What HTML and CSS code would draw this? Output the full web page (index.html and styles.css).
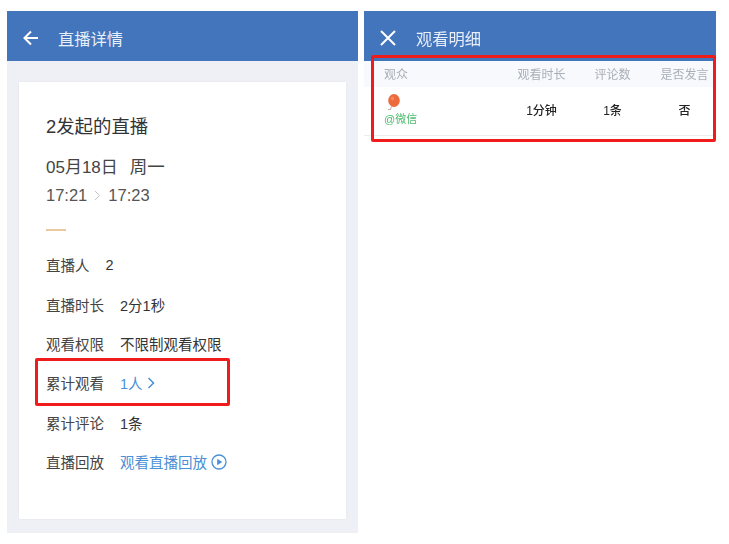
FILE: index.html
```html
<!DOCTYPE html>
<html lang="zh-CN">
<head>
<meta charset="utf-8">
<title>直播详情</title>
<link rel="stylesheet" href="styles.css">
</head>
<body>
<div class="stage">
  <section class="panel panel-detail">
    <header class="bar">
      <svg class="bar-icon" width="18" height="18" viewBox="0 0 18 18"><path d="M16 9H2.500M9 2.500 2.500 9 9 15.500" fill="none" stroke="#fff" stroke-width="2"/></svg>
      <h1 class="bar-title">直播详情</h1>
    </header>
    <div class="card">
      <h2 class="live-title">2发起的直播</h2>
      <p class="live-date">05月18日<span class="weekday">周一</span></p>
      <p class="live-time">17:21<svg class="time-arrow" width="7" height="11" viewBox="0 0 7 11"><path d="M1 1l4.500 4.500L1 10" fill="none" stroke="#c4c4c4" stroke-width="1"/></svg>17:23</p>
      <div class="rule"></div>
      <dl class="facts">
        <div class="fact"><dt>直播人</dt><dd>2</dd></div>
        <div class="fact"><dt>直播时长</dt><dd>2分1秒</dd></div>
        <div class="fact"><dt>观看权限</dt><dd>不限制观看权限</dd></div>
        <div class="fact"><dt>累计观看</dt><dd class="link">1人 <svg width="8" height="12" viewBox="0 0 8 12"><path d="M1.500 1l5 5-5 5" fill="none" stroke="#4a90d6" stroke-width="1.500"/></svg></dd></div>
        <div class="fact"><dt>累计评论</dt><dd>1条</dd></div>
        <div class="fact"><dt>直播回放</dt><dd class="link">观看直播回放 <svg width="16" height="16" viewBox="0 0 16 16"><circle cx="8" cy="8" r="7" fill="none" stroke="#4a90d6" stroke-width="1.300"/><path d="M6.200 4.800v6.400L11.200 8z" fill="#4a90d6"/></svg></dd></div>
      </dl>
    </div>
    <div class="highlight highlight-fact"></div>
  </section>
  <section class="panel panel-list">
    <header class="bar">
      <svg class="bar-icon" width="18" height="18" viewBox="0 0 18 18"><path d="M2 2l14 14M16 2 2 16" fill="none" stroke="#fff" stroke-width="2"/></svg>
      <h1 class="bar-title">观看明细</h1>
    </header>
    <div class="table">
      <div class="thead">
        <span class="col-name">观众</span>
        <span class="col-time">观看时长</span>
        <span class="col-count">评论数</span>
        <span class="col-speak">是否发言</span>
      </div>
      <div class="tbody">
        <div class="col-name viewer">
          <svg class="avatar" width="14" height="17" viewBox="0 0 14 17"><path d="M4.500 12.500 3.500 15.500H1" fill="none" stroke="#a89a8a" stroke-width="0.800"/><ellipse cx="7" cy="6.500" rx="5.800" ry="6.500" fill="#ec6a3c"/><ellipse cx="5.500" cy="4.500" rx="1.500" ry="2" fill="#f28a5e"/></svg>
          <span class="source">@微信</span>
        </div>
        <span class="col-time">1分钟</span>
        <span class="col-count">1条</span>
        <span class="col-speak">否</span>
      </div>
    </div>
    <div class="highlight highlight-table"></div>
  </section>
</div>
</body>
</html>
```
FILE: styles.css
```css
* { box-sizing: border-box; }
html, body { margin: 0; background: #fff; }
body {
  width: 729px;
  height: 544px;
  overflow: hidden;
  font-family: "Liberation Sans", "Noto Sans CJK SC", sans-serif;
}
.stage {
  display: flex;
  gap: 6px;
  padding: 11px 13px 10px 7px;
  height: 544px;
  filter: blur(0.4px);
}
.panel { position: relative; height: 522px; }
.panel-detail { width: 351px; background: #eef0f5; }
.panel-list { width: 352px; background: #fff; }
.bar {
  display: flex;
  align-items: center;
  height: 50px;
  padding: 3px 0 0 15px;
  background: #4275bb;
  color: #e9eff8;
}
.bar-icon { flex: none; }
.bar-title { margin: 0 0 0 18px; font-size: 16.300px; font-weight: 400; }
.panel-list .bar-title { margin-left: 19px; }
.card {
  margin: 21px 12px 0;
  height: 437px;
  padding: 33px 27px 0;
  background: #fff;
  box-shadow: 0 0 2px rgba(0,0,0,.06);
  color: #333;
}
.live-title { margin: 0; font-size: 18.400px; line-height: 24px; font-weight: 400; }
.live-date { margin: 16px 0 0; font-size: 17px; line-height: 24px; color: #444; }
.weekday { margin-left: 12px; font-size: 17.500px; }
.live-time { margin: 4px 0 0; font-size: 16.500px; line-height: 22px; color: #555; display: flex; align-items: center; gap: 7px; }
.rule { width: 20px; height: 2px; margin-top: 23px; background: #e8c9a0; }
.facts { margin: 14px 0 0; }
.fact { display: flex; align-items: center; gap: 16px; height: 39.400px; font-size: 14.500px; }
.fact dt { color: #444; }
.fact dd { margin: 0; display: flex; align-items: center; gap: 4px; color: #333; }
.fact dd.link { color: #4a90d6; }
.highlight { position: absolute; border: 3px solid #f01c1c; border-radius: 2px; }
.highlight-fact { left: 28px; top: 347px; width: 195px; height: 48px; }
.highlight-table { left: 7px; top: 44px; width: 345px; height: 87px; }
.thead, .tbody { display: grid; grid-template-columns: 122px 71px 71px 73px; align-items: center; padding-left: 20px; text-align: center; }
.thead { height: 26px; padding-bottom: 2px; background: #f7f9fc; font-size: 12px; color: #aab0b8; }
.tbody { height: 49px; padding-bottom: 3px; border-bottom: 1px solid #eee; font-size: 12px; font-weight: 500; color: #222; }
.col-name { text-align: left; }
.viewer { display: flex; flex-direction: column; align-items: flex-start; gap: 1px; }
.avatar { margin-left: 3px; }
.source { font-size: 11px; line-height: 14px; font-weight: 400; color: #4cbb6c; }
```
